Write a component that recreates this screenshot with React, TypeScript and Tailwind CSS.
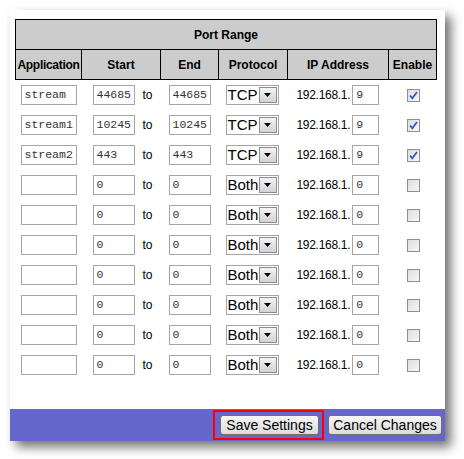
import React from "react";

type Rule = {
  app: string;
  start: string;
  end: string;
  proto: string;
  ip: string;
  on: boolean;
};

const rules: Rule[] = [
  { app: "stream", start: "44685", end: "44685", proto: "TCP", ip: "9", on: true },
  { app: "stream1", start: "10245", end: "10245", proto: "TCP", ip: "9", on: true },
  { app: "stream2", start: "443", end: "443", proto: "TCP", ip: "9", on: true },
  ...Array.from({ length: 7 }, () => ({
    app: "",
    start: "0",
    end: "0",
    proto: "Both",
    ip: "0",
    on: false,
  })),
];

const Field = ({ value, width }: { value: string; width: string }) => (
  <div
    className={`inline-flex h-[20px] ${width} items-center border border-[#a5a5a5] bg-white pl-[3px] align-middle font-['Liberation_Mono',monospace] text-[11.5px] text-[#333]`}
  >
    {value}
  </div>
);

const Select = ({ value }: { value: string }) => (
  <div className="inline-flex h-[20px] w-[53px] items-center justify-between border border-[#a5a5a5] bg-white align-middle">
    <span className="pl-[1px] text-[15px] leading-none text-black">{value}</span>
    <span className="mr-[1px] flex h-[16px] w-[18px] items-center justify-center border border-[#8d8d8d] bg-gradient-to-b from-[#f4f4f4] to-[#d2d2d2]">
      <svg width="7" height="4" viewBox="0 0 7 4">
        <path d="M0 0h7L3.5 4z" fill="#000" />
      </svg>
    </span>
  </div>
);

const Check = ({ on }: { on: boolean }) => (
  <div className="inline-flex h-[13px] w-[13px] items-center justify-center border border-[#8e8f8f] bg-gradient-to-br from-[#dcdde0] to-[#f7f7f8] align-middle">
    {on && (
      <svg width="9" height="9" viewBox="0 0 9 9">
        <path d="M1 4.5l2.3 2.8L8 1" stroke="#3d55b8" strokeWidth="1.8" fill="none" />
      </svg>
    )}
  </div>
);

export default function App() {
  return (
    <div className="h-[459px] w-[464px] bg-white p-[10px] font-['Liberation_Sans',Arial,sans-serif]">
      <div className="w-[435px] bg-white shadow-[6px_6px_10px_rgba(0,0,0,0.55)]">
        <div className="h-[399px] pl-[5px] pt-[9px]">
          <table className="w-[421px] table-fixed border-collapse text-center">
            <colgroup>
              <col className="w-[66px]" />
              <col className="w-[79px]" />
              <col className="w-[58px]" />
              <col className="w-[69px]" />
              <col className="w-[101px]" />
              <col className="w-[48px]" />
            </colgroup>
            <thead>
              <tr className="h-[30px] bg-[#cccccc]">
                <th colSpan={6} className="border border-black text-[12px] font-bold text-black">
                  Port Range
                </th>
              </tr>
              <tr className="h-[30px] bg-[#cccccc] text-[12px] font-bold text-black">
                <th className="border border-black px-0 tracking-[-0.3px]">Application</th>
                <th className="border border-black">Start</th>
                <th className="border border-black">End</th>
                <th className="border border-black">Protocol</th>
                <th className="border border-black">IP Address</th>
                <th className="border border-black">Enable</th>
              </tr>
            </thead>
            <tbody>
              {rules.map((r, i) => (
                <tr key={i} className="h-[30px] text-left text-[12px] text-black">
                  <td className="pl-[5px]">
                    <Field value={r.app} width="w-[56px]" />
                  </td>
                  <td className="whitespace-nowrap pl-[11px]">
                    <Field value={r.start} width="w-[42px]" />
                    <span className="ml-[8px] align-middle">to</span>
                  </td>
                  <td className="pl-[8px]">
                    <Field value={r.end} width="w-[42px]" />
                  </td>
                  <td className="pl-[7px]">
                    <Select value={r.proto} />
                  </td>
                  <td className="whitespace-nowrap pl-[9px]">
                    <span className="align-middle tracking-[-0.3px]">192.168.1.</span>
                    <span className="ml-[2px]">
                      <Field value={r.ip} width="w-[27px]" />
                    </span>
                  </td>
                  <td className="pl-[18px]">
                    <Check on={r.on} />
                  </td>
                </tr>
              ))}
            </tbody>
          </table>
        </div>
        <div className="flex h-[32px] items-center justify-end gap-[4px] bg-[#6666cc] pr-[3px]">
          <div className="border-2 border-[#ff0000] py-[1px] pl-[5px] pr-[3px]">
            <button className="h-[20px] w-[99px] rounded-[3px] border border-[#707070] bg-gradient-to-b from-[#f6f6f6] to-[#dcdcdc] text-[14px] leading-none text-black">
              Save Settings
            </button>
          </div>
          <button className="h-[20px] w-[114px] rounded-[3px] border border-[#707070] bg-gradient-to-b from-[#f6f6f6] to-[#dcdcdc] text-[14px] leading-none text-black">
            Cancel Changes
          </button>
        </div>
      </div>
    </div>
  );
}
